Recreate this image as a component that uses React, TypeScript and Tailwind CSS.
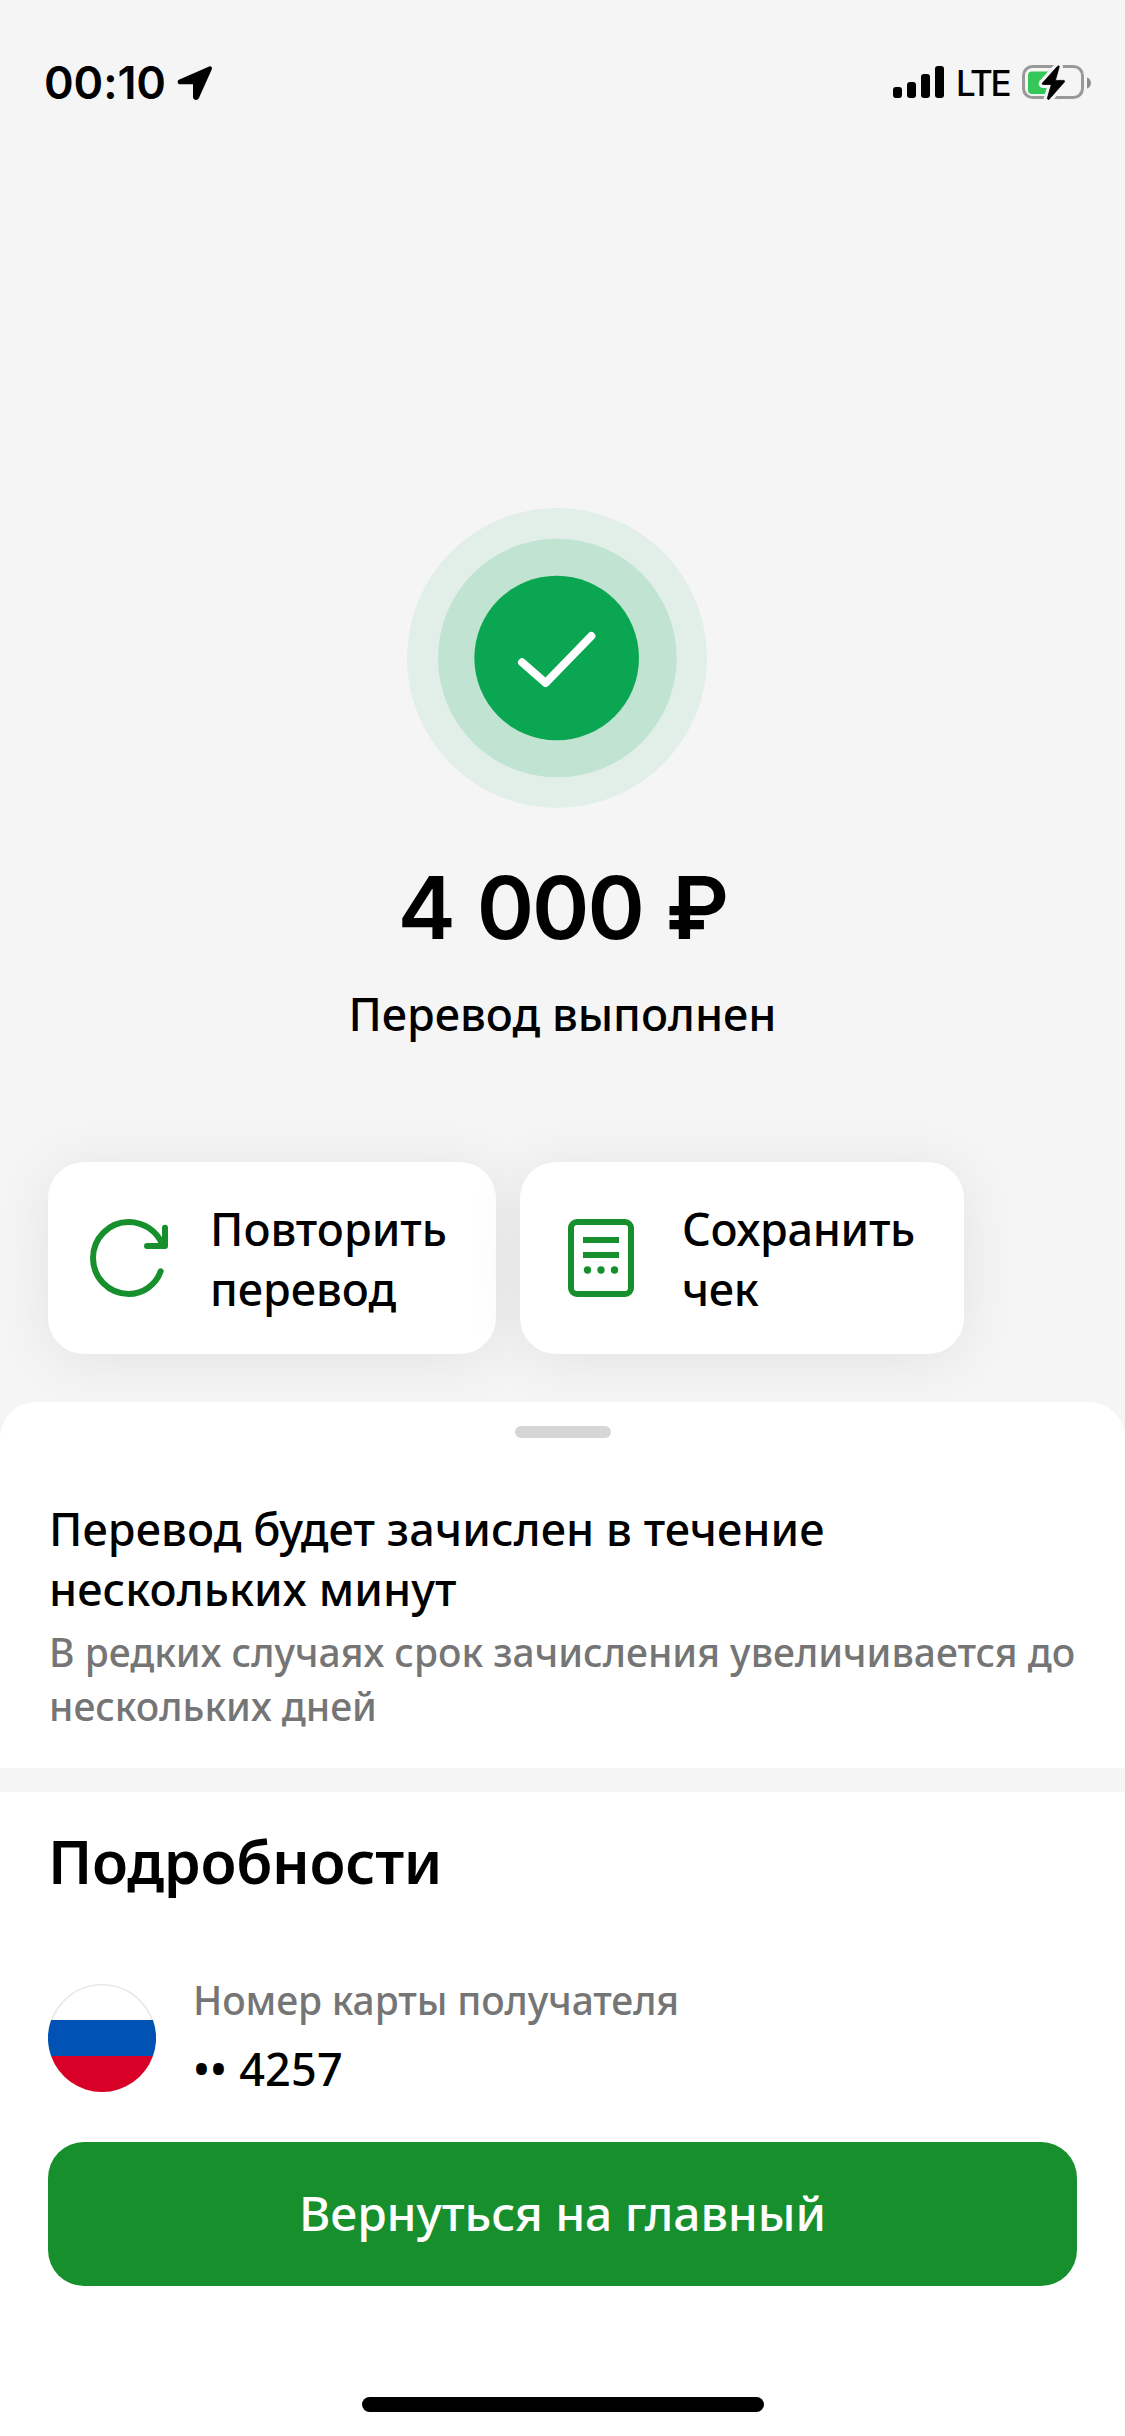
import React from "react";

function LocationIcon() {
    return (
        <svg width="36" height="36" viewBox="0 0 108 108" fill="currentColor" stroke="currentColor" strokeWidth="12" strokeLinejoin="round">
            <path d="M99 10L8 50Q8 52 10 52H54V97Q56 101 60 97Z" />
        </svg>
    );
}

function SignalIcon() {
    return (
        <svg width="51" height="32" viewBox="0 0 51 32" fill="currentColor">
            <rect x="0" y="21" width="9" height="11" rx="3" />
            <rect x="14" y="16" width="9" height="16" rx="3" />
            <rect x="28" y="8" width="9" height="24" rx="3" />
            <rect x="42" y="0" width="9" height="32" rx="3" />
        </svg>
    );
}

function BatteryIcon() {
    return (
        <svg width="69" height="38" viewBox="0 0 69 38">
            <rect x="1.5" y="3.5" width="59" height="31" rx="9" fill="none" stroke="#999999" strokeWidth="3" />
            <path d="M65 14.500C70.300 16 70.300 24 65 25.500Z" fill="#8e8e8e" />
            <path d="M10 8.500H30V31H10Q6 31 6 27V12.500Q6 8.500 10 8.500Z" fill="#34c759" />
            <path
                d="M35.500 3.300L20.300 20.200Q19.800 21.500 21 21.500H29.300L25.300 35.500Q26 37.200 27.200 36.200L42.400 18.900Q43 17.500 41.800 17.400H33.400L37.300 3.600Q36.800 2 35.500 3.300Z"
                fill="none"
                stroke="#f5f5f5"
                strokeWidth="7"
            />
            <path
                d="M35.500 3.300L20.300 20.200Q19.800 21.500 21 21.500H29.300L25.300 35.500Q26 37.200 27.200 36.200L42.400 18.900Q43 17.500 41.800 17.400H33.400L37.300 3.600Q36.800 2 35.500 3.300Z"
                fill="#000000"
                stroke="#000000"
                strokeWidth="0.8"
            />
        </svg>
    );
}

function SuccessIcon() {
    return (
        <svg width="300" height="300" viewBox="0 0 900 900" fill="none">
            <circle cx="450" cy="450" r="450" fill="#e1efe8" />
            <circle cx="451" cy="450" r="358" fill="#c0e3d2" />
            <circle cx="449" cy="450" r="247" fill="#0aa652" />
            <path d="M345 463L416 525L553 384" stroke="#ffffff" strokeWidth="24" strokeLinecap="round" strokeLinejoin="round" />
        </svg>
    );
}

function RepeatIcon() {
    return (
        <svg width="78" height="78" viewBox="0 0 234 234" fill="none" stroke="#178f2c" strokeWidth="18" strokeLinecap="round" strokeLinejoin="round">
            <path d="M212 157A102 102 0 0 1 116 225A107 108 0 0 1 116 9A110 110 0 0 1 217 76" />
            <path d="M225 26V81H171" />
        </svg>
    );
}

function ReceiptIcon() {
    return (
        <svg width="66" height="78" viewBox="0 0 198 234" fill="none" stroke="#178f2c" strokeWidth="18">
            <rect x="9" y="9" width="180" height="216" rx="18" />
            <path d="M45 63H153M45 108H153" />
            <g fill="#178f2c" stroke="none">
                <circle cx="58.500" cy="153" r="11" />
                <circle cx="99" cy="153" r="11" />
                <circle cx="139.500" cy="153" r="11" />
            </g>
        </svg>
    );
}

function FlagIcon() {
    return (
        <svg width="108" height="108" viewBox="0 0 108 108">
            <circle cx="54" cy="54" r="53.250" fill="#ffffff" stroke="#e8e8e8" strokeWidth="1.500" />
            <path d="M3.100 36H104.900A54 54 0 0 1 104.900 72H3.100A54 54 0 0 1 3.100 36Z" fill="#0052b4" />
            <path d="M3.100 72H104.900A54 54 0 0 1 3.100 72Z" fill="#d80027" />
        </svg>
    );
}

function StatusBar() {
    return (
        <header className="flex h-[109px] items-start justify-between pt-[55px] pr-[34px] pl-[44px] font-[Inter,sans-serif]">
            <div className="flex items-start">
                <span className="w-[133px] pt-px text-[45px] leading-[54px] font-semibold tracking-[-0.1px] whitespace-nowrap">00:10</span>
                <div className="pt-[10px]">
                    <LocationIcon />
                </div>
            </div>
            <div className="flex items-start">
                <div className="pt-[11px]">
                    <SignalIcon />
                </div>
                <span className="ml-[12px] w-[55px] pt-[7px] text-[35px] leading-[42px] font-medium tracking-[-2.4px] whitespace-nowrap">LTE</span>
                <div className="ml-[11px] pt-[8px]">
                    <BatteryIcon />
                </div>
            </div>
        </header>
    );
}

export default function App() {
    return (
        <div className="flex h-[2436px] w-[1125px] flex-col overflow-hidden bg-[#f5f5f5] font-['Noto_Sans',sans-serif] text-black">
            <StatusBar />

            {/* Transfer result */}
            <main className="flex h-[1293px] flex-col items-center pt-[399px]">
                <div className="pr-[11px]">
                    <SuccessIcon />
                </div>
                <h1 className="mt-[46px] font-[Inter,sans-serif] text-[87px] leading-[108px] font-semibold tracking-[-2px] [word-spacing:3px] whitespace-nowrap">
                    4 000 ₽
                </h1>
                <p className="mt-[22px] text-[45px] leading-[60px] font-medium whitespace-nowrap">Перевод выполнен</p>

                <div className="mt-[118px] flex gap-6 self-start pl-12">
                    <button className="flex h-[192px] w-[448px] items-center rounded-[36px] bg-white pl-[42px] text-left shadow-[0_6px_60px_rgba(0,0,0,0.08)]">
                        <RepeatIcon />
                        <span className="ml-[42px] pt-[2px] text-[45px] leading-[60px] font-medium">
                            Повторить
                            <br />
                            перевод
                        </span>
                    </button>
                    <button className="flex h-[192px] w-[444px] items-center rounded-[36px] bg-white pl-12 text-left shadow-[0_6px_60px_rgba(0,0,0,0.08)]">
                        <ReceiptIcon />
                        <span className="ml-12 pt-[2px] text-[45px] leading-[60px] font-medium tracking-[-0.3px]">
                            Сохранить
                            <br />
                            чек
                        </span>
                    </button>
                </div>
            </main>

            {/* Bottom sheet */}
            <section className="relative flex flex-1 flex-col rounded-t-[36px] bg-white">
                <div className="mt-6 h-3 w-24 self-center rounded-full bg-[#d6d6d6]" />
                <div className="mt-[61px] h-[269px] pl-[49px]">
                    <h2 className="text-[45px] leading-[60px] font-medium tracking-[0.1px] whitespace-nowrap">
                        Перевод будет зачислен в течение
                        <br />
                        нескольких минут
                    </h2>
                    <p className="mt-[6px] text-[39px] leading-[54px] font-medium whitespace-nowrap text-[#757575]">
                        В редких случаях срок зачисления увеличивается до
                        <br />
                        нескольких дней
                    </p>
                </div>
                <div className="h-6 bg-[#f5f5f5]" />

                <h2 className="mt-[33px] px-12 text-[59px] leading-[72px] font-semibold tracking-[-0.3px]">Подробности</h2>

                <div className="mt-[76px] flex h-[126px] px-12">
                    <div className="pt-[11px]">
                        <FlagIcon />
                    </div>
                    <div className="ml-[37px]">
                        <p className="text-[39px] leading-[54px] font-medium tracking-[-0.12px] whitespace-nowrap text-[#757575]">Номер карты получателя</p>
                        <p className="mt-3 text-[45px] leading-[60px] font-medium tracking-[0.2px] whitespace-nowrap">•• 4257</p>
                    </div>
                </div>

                <button className="mx-12 mt-[43px] h-36 rounded-[36px] bg-[#178f2c] pb-[3px] text-[48px] font-medium tracking-[-0.1px] text-white">
                    Вернуться на главный
                </button>

                <div className="mt-[111px] h-[15px] w-[402px] self-center rounded-full bg-black" />
            </section>
        </div>
    );
}
